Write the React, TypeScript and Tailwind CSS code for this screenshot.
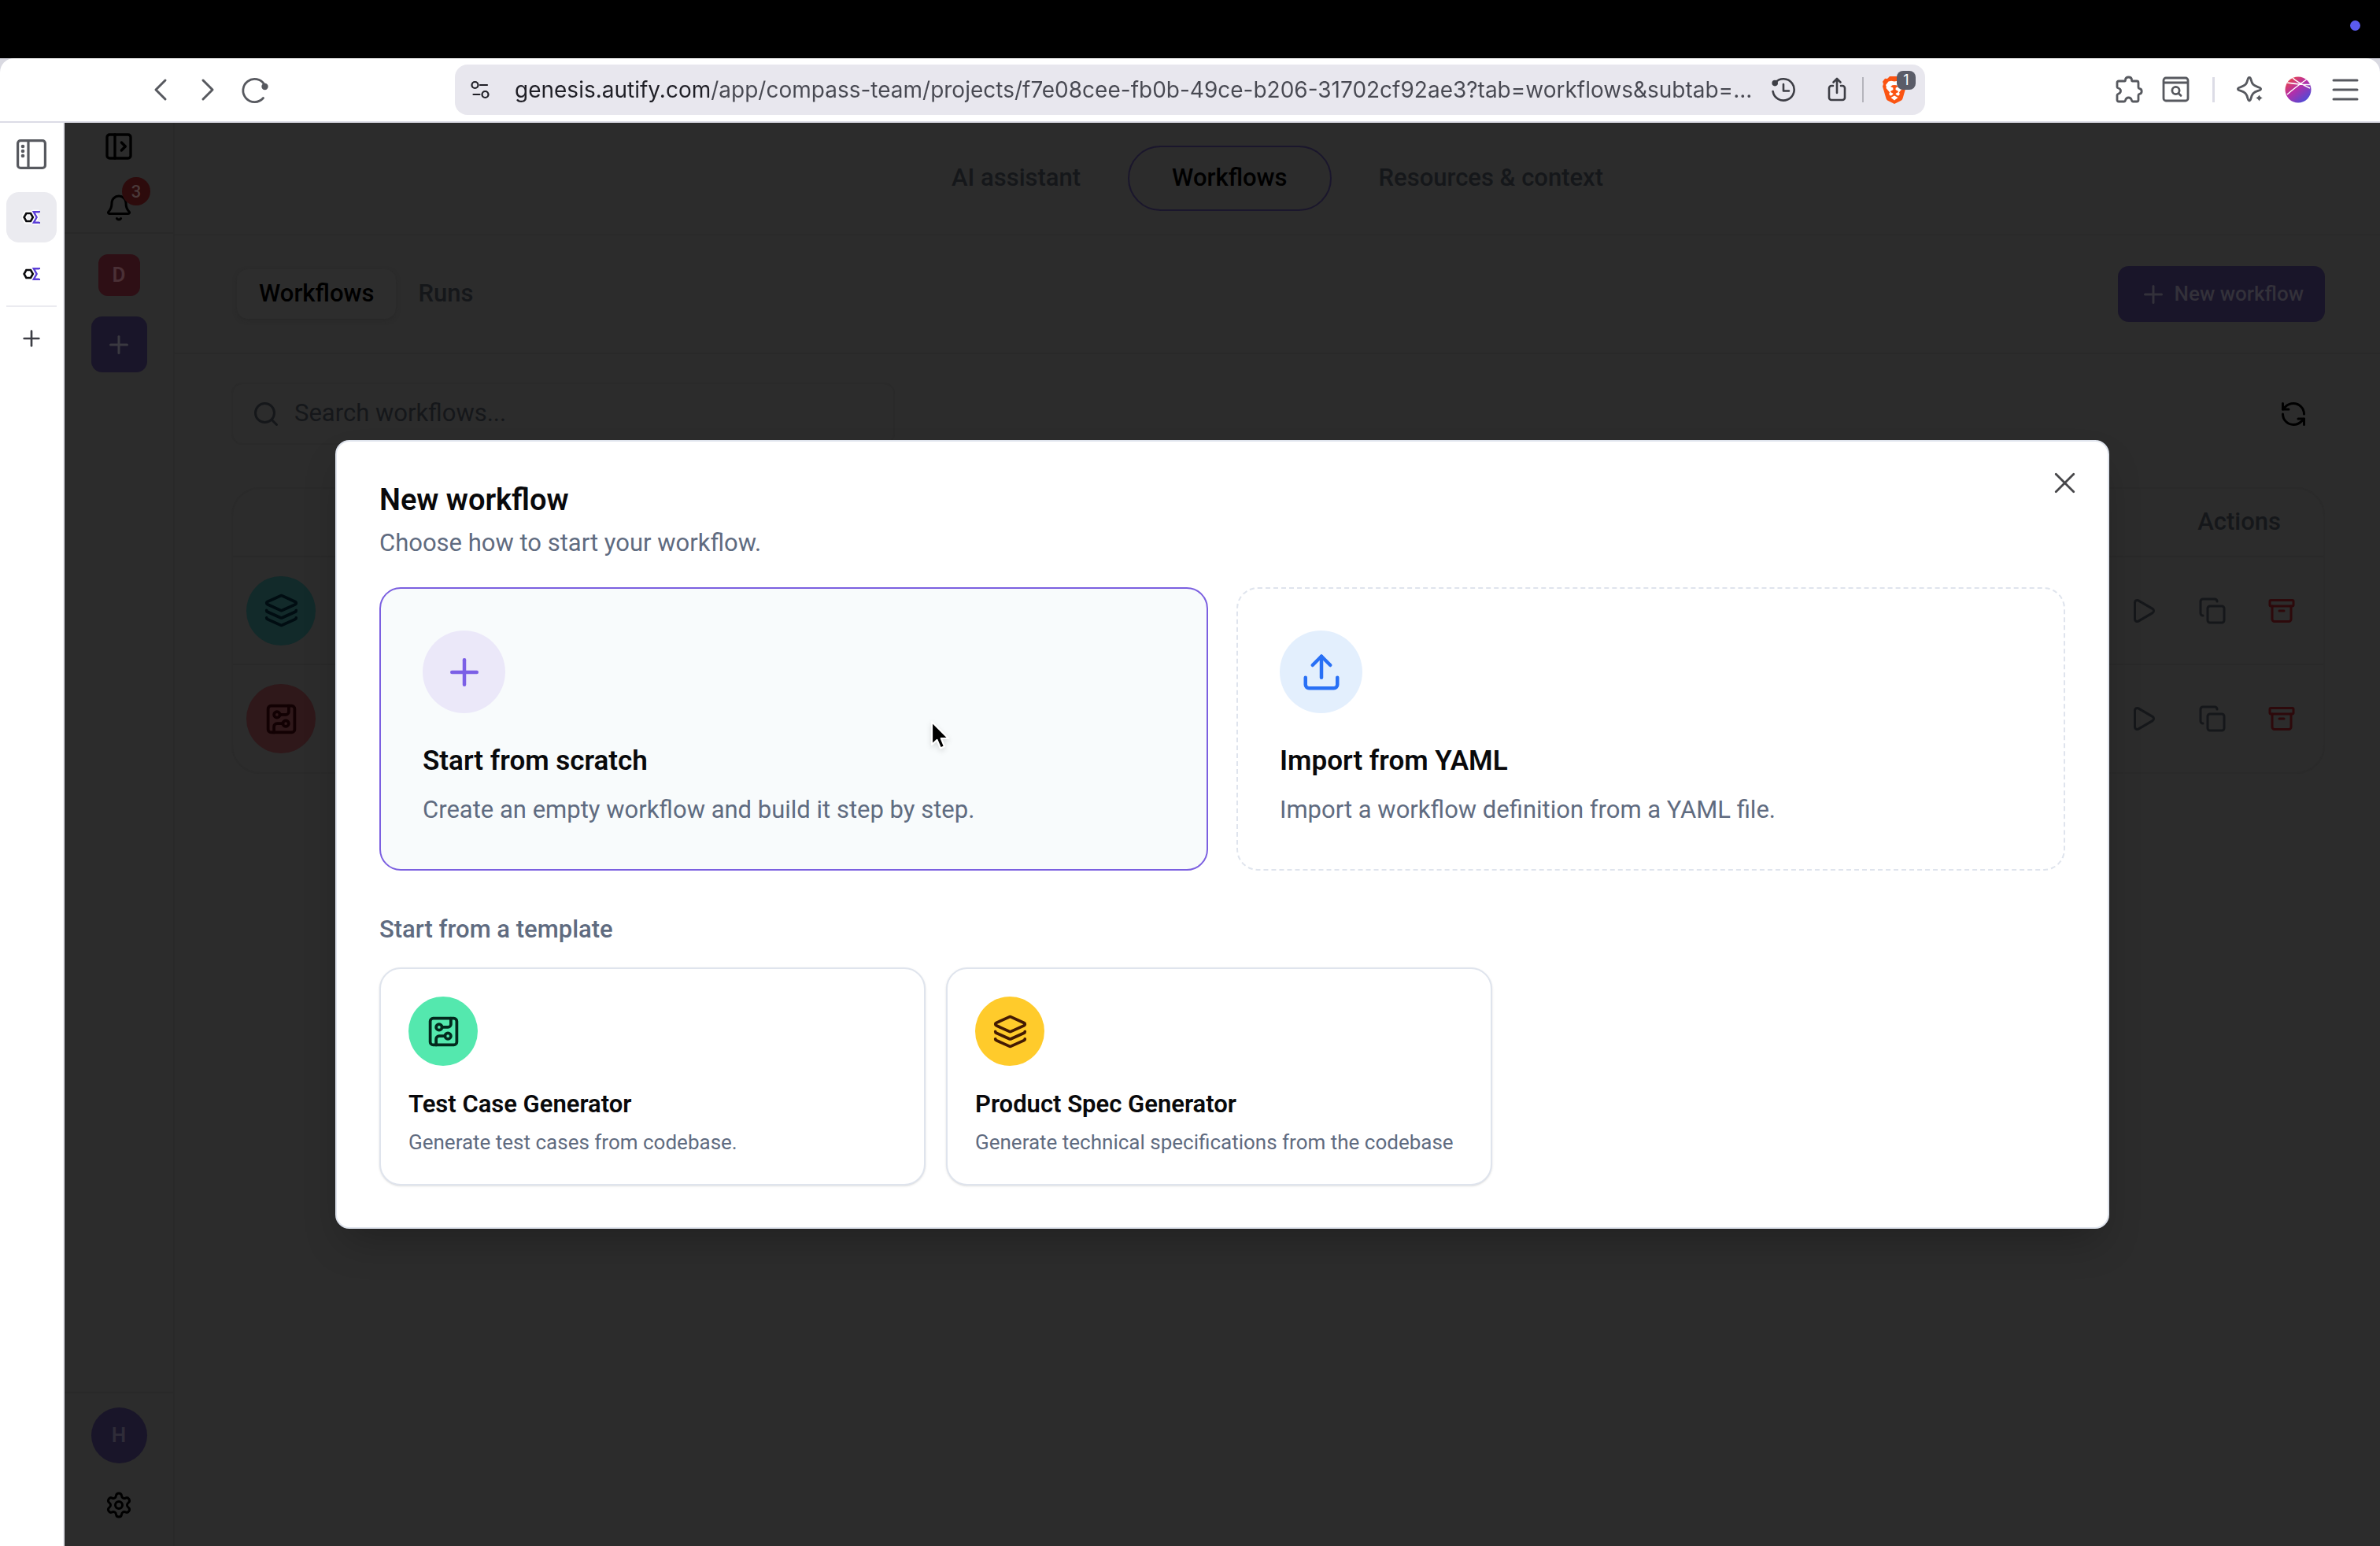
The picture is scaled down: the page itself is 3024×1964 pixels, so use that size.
import React from 'react';
import {
  Archive,
  Bell,
  ChevronLeft,
  ChevronRight,
  CircuitBoard,
  Copy,
  Layers,
  PanelLeftOpen,
  Play,
  Plus,
  RefreshCcw,
  Search,
  Settings,
  Upload,
  X,
} from 'lucide-react';

type WorkflowIcon = React.ComponentType<{ className?: string; strokeWidth?: number }>;

interface Workflow {
  id: string;
  icon: WorkflowIcon;
  iconClass: string;
}

interface Template {
  name: string;
  description: string;
  icon: WorkflowIcon;
  iconClass: string;
}

const workflows: Workflow[] = [
  { id: 'spec', icon: Layers, iconClass: 'bg-[#122a2a] text-[#010d12]' },
  { id: 'tests', icon: CircuitBoard, iconClass: 'bg-[#2f181a] text-[#120103]' },
];

const templates: Template[] = [
  {
    name: 'Test Case Generator',
    description: 'Generate test cases from codebase.',
    icon: CircuitBoard,
    iconClass: 'bg-[#54e8ae] text-[#03291d]',
  },
  {
    name: 'Product Spec Generator',
    description: 'Generate technical specifications from the codebase',
    icon: Layers,
    iconClass: 'bg-[#ffcb2b] text-[#431a03]',
  },
];

const pageUrl =
  'genesis.autify.com/app/compass-team/projects/f7e08cee-fb0b-49ce-b206-31702cf92ae3?tab=workflows&subtab=...';

/* ---------- Browser icons ---------- */

const ReloadIcon = () => (
  <svg viewBox="0 0 36 36" className="size-9" fill="none" stroke="#57595f" strokeWidth="2.8" strokeLinecap="round">
    <path d="M28.5 28.5A14.6 14.6 0 1 1 30 11.5" />
    <circle cx="30.500" cy="14" r="4.2" fill="#57595f" stroke="none" />
  </svg>
);

const TuneIcon = () => (
  <svg viewBox="0 0 24 24" className="size-6 shrink-0" fill="none" stroke="#1f1f26" strokeWidth="2.2" strokeLinecap="round">
    <circle cx="5.5" cy="6" r="4" />
    <path d="M12 6h9M3.5 18h8" />
    <circle cx="18.5" cy="18" r="4" />
  </svg>
);

const HistoryIcon = () => (
  <svg viewBox="0 0 32 32" className="size-8" fill="none" stroke="#3d3e45" strokeWidth="2.6" strokeLinecap="round" strokeLinejoin="round">
    <path d="M2.6 18A13.6 13.6 0 1 0 5.6 7.2" />
    <circle cx="5.2" cy="7.6" r="3.8" fill="#3d3e45" stroke="none" />
    <path d="M16 9v8.5h7" />
  </svg>
);

const ShareIcon = () => (
  <svg viewBox="0 0 32 32" className="size-8" fill="none" stroke="#3d3e45" strokeWidth="2.6" strokeLinecap="round" strokeLinejoin="round">
    <path d="M16 20V2M11.5 6.500L16 2l4.500 4.500M11 11H9a3 3 0 0 0-3 3v12a3 3 0 0 0 3 3h14a3 3 0 0 0 3-3V14a3 3 0 0 0-3-3h-2" />
  </svg>
);

const BraveIcon = () => (
  <svg viewBox="0 0 32 36" className="h-9 w-8">
    <path
      fill="#fb5412"
      d="M10 1h12l3 3 3-.3 3 4-1 3 1 3-4.500 15.500a5 5 0 0 1-2 2.500L16 36l-8.500-4.300a5 5 0 0 1-2-2.500L1 13.700l1-3-1-3 3-4L7 4z"
    />
    <path
      fill="#fff"
      d="M16 7.500l4-.8 3.500.8 3.500 4.500-.8 2 .3 2-4.500 5.300.8 2.200-1.300 2-2-.3-2-1.800.5-1 3-1.500-.4-1.200-3.100-1.700.2-2.500 3.300-1.500-2.500-1.800L16 12l-2.500.2-2.500 1.800 3.300 1.500.2 2.500-3.100 1.700-.4 1.200 3 1.500.5 1-2 1.800-2 .3-1.300-2 .8-2.200L5.500 16l.3-2-.8-2 3.500-4.500 3.500-.8zM16 25.500l4.500 2.500-4.500 3.500-4.500-3.500z"
    />
  </svg>
);

const PuzzleIcon = () => (
  <svg viewBox="0 0 36 36" className="size-9" fill="none" stroke="#57595f" strokeWidth="2.8" strokeLinejoin="round">
    <path d="M5 7h7.500c.8 0 1-.7 1-1.500C13.500 3 15 2 17.500 2s4 1 4 3.500c0 .8.200 1.500 1 1.500H28a2 2 0 0 1 2 2v6c0 1 .5 1.500 1.500 1.700 1.700.4 2.700 1.500 2.700 3.300s-1 3-2.700 3.300c-1 .2-1.500.7-1.500 1.700v6a2 2 0 0 1-2 2h-5c-1 0-1.300-.6-1.500-1.500C21 29.500 19.800 28 17.500 28S14 29.500 13.500 31.500c-.2.900-.5 1.500-1.500 1.500H5a2 2 0 0 1-2-2v-6c0-1 .5-1.300 1.500-1.700C6.500 22.500 7.500 21.500 7.500 19.500s-1-3-3-3.500C3.500 15.700 3 15.500 3 14.500V9a2 2 0 0 1 2-2z" />
  </svg>
);

const WindowSearchIcon = () => (
  <svg viewBox="0 0 36 36" className="size-9" fill="none" stroke="#57595f" strokeWidth="2.8" strokeLinecap="round">
    <rect x="2" y="3" width="31" height="29" rx="3" />
    <path d="M2.500 9h30" />
    <circle cx="17.500" cy="19" r="4.6" />
    <path d="M21 22.500l3 3" />
  </svg>
);

const SparkleIcon = () => (
  <svg viewBox="0 0 36 36" className="size-9" fill="none" stroke="#57595f" strokeWidth="2.8" strokeLinejoin="round">
    <path d="M16 2.500c1.200 0 1.600 1 2 2.400 1.500 6.100 2.800 7.700 9.600 9.900 1.500.5 3 .8 3 2.200s-1.500 1.700-3 2.200c-6.800 2.200-8.100 3.800-9.600 9.900-.4 1.400-.8 2.900-2 2.900s-1.600-1.500-2-2.900c-1.500-6.100-2.800-7.700-9.600-9.900-1.500-.5-3-.8-3-2.200s1.500-1.700 3-2.200c6.800-2.200 8.100-3.800 9.600-9.900.4-1.400.8-2.400 2-2.400z" />
    <path
      fill="#57595f"
      stroke="#fff"
      strokeWidth="1.5"
      d="M28.500 22c1 4.200 2 5.200 6.500 6.500-4.500 1.300-5.500 2.300-6.500 6.500-1-4.200-2-5.200-6.500-6.500 4.500-1.300 5.500-2.300 6.500-6.500z"
    />
  </svg>
);

const AssistantIcon = () => (
  <svg viewBox="0 0 34 34" className="size-[34px]">
    <defs>
      <linearGradient id="assistant" x1="0.1" y1="0" x2="0.9" y2="1">
        <stop offset="0" stopColor="#f04a3c" />
        <stop offset="0.45" stopColor="#b52ea8" />
        <stop offset="1" stopColor="#3a52e0" />
      </linearGradient>
      <clipPath id="assistantClip">
        <circle cx="17" cy="17" r="16.5" />
      </clipPath>
    </defs>
    <circle cx="17" cy="17" r="16.5" fill="url(#assistant)" />
    <g clipPath="url(#assistantClip)" stroke="#fff" strokeWidth="1.5" fill="none">
      <path d="M3 8c10 1.500 20 3 31 2.500M10 2c5 5 11 8 22 13M29 3C19 10 11 16 3 23" />
    </g>
  </svg>
);

const MenuIcon = () => (
  <svg viewBox="0 0 34 28" className="h-7 w-[34px]" stroke="#57595f" strokeWidth="3" strokeLinecap="round">
    <path d="M2 2h30M2 14h30M2 26h30" />
  </svg>
);

const SidebarIcon = () => (
  <svg viewBox="0 0 40 40" className="size-10" fill="none" stroke="#57595f" strokeWidth="3.2">
    <rect x="2.600" y="2.600" width="34.800" height="34.800" rx="3.500" />
    <path d="M16 3v34" />
    <g fill="#57595f" stroke="none">
      <circle cx="9" cy="10" r="2.3" />
      <circle cx="9" cy="16" r="2.3" />
      <circle cx="9" cy="22" r="2.3" />
    </g>
  </svg>
);

const SiteIcon = () => (
  <svg viewBox="0 0 24 20" className="h-5 w-6" fill="none">
    <path d="M5.200 4.800h6l3 5.200-3 5.200h-6L2.200 10z" stroke="#fff" strokeWidth="6" strokeLinejoin="round" />
    <path d="M21.500 3h-7l4.500 7-4.500 7h7" stroke="#fff" strokeWidth="5" strokeLinejoin="round" />
    <path d="M5.400 5h5.600l2.800 5-2.800 5H5.400L2.600 10z" stroke="#0b0b0e" strokeWidth="2.6" />
    <path d="M21.800 4v-.8H14.800L18.600 10l-3.800 6.800h7V16" stroke="#5b3fd6" strokeWidth="2.4" />
  </svg>
);

const CursorIcon = () => (
  <svg viewBox="0 0 28 40" className="absolute top-[166px] left-[697px] h-10 w-7 drop-shadow-md">
    <path d="M3 3v29l6.500-6 4.500 10.500 5-2.200L14.800 24H24z" fill="#000" stroke="#fff" strokeWidth="2.2" strokeLinejoin="round" />
  </svg>
);

/* ---------- Browser chrome ---------- */

const BrowserToolbar: React.FC = () => (
  <header className="bg-[#d9d9e1]">
    <div className="flex h-[82px] items-center rounded-t-[18px] border-b-2 border-[#dcdce6] bg-white">
      <div className="flex w-[578px] shrink-0 items-center pl-[174px]">
        <button aria-label="Back" className="flex w-[60px] justify-center text-[#57595f]">
          <ChevronLeft className="h-[54px] w-12" strokeWidth={1.5} />
        </button>
        <button aria-label="Forward" className="flex w-[60px] justify-center text-[#57595f]">
          <ChevronRight className="h-[54px] w-12" strokeWidth={1.5} />
        </button>
        <button aria-label="Reload" className="flex w-[60px] justify-center">
          <ReloadIcon />
        </button>
      </div>

      <div className="flex h-16 min-w-0 flex-1 items-center rounded-2xl bg-[#e8e7ee] pl-5">
        <TuneIcon />
        <input
          aria-label="Address"
          readOnly
          value={pageUrl}
          className="ml-8 min-w-0 flex-1 bg-[linear-gradient(90deg,#1f1f26_248px,#484952_248px)] bg-clip-text font-['Inter',sans-serif] text-[28px] leading-10 text-transparent outline-none"
        />
        <button aria-label="History" className="mr-2 flex w-[60px] justify-center">
          <HistoryIcon />
        </button>
        <button aria-label="Share" className="flex w-[60px] justify-center">
          <ShareIcon />
        </button>
        <div className="ml-0.5 h-8 w-0.5 bg-[#b4b4bc]" />
        <button aria-label="Brave Shields" className="relative flex w-[78px] justify-center">
          <BraveIcon />
          <span className="absolute -top-1.5 right-3 flex size-6 items-center justify-center rounded-lg bg-[#5a5c68] font-['Inter',sans-serif] text-lg text-white">
            1
          </span>
        </button>
      </div>

      <div className="flex w-[578px] shrink-0 items-center justify-end pr-[14px]">
        <button aria-label="Extensions" className="flex w-[60px] justify-center">
          <PuzzleIcon />
        </button>
        <button aria-label="Search page" className="flex w-[60px] justify-center">
          <WindowSearchIcon />
        </button>
        <div className="mx-4 h-8 w-[3px] bg-[#dcdce6]" />
        <button aria-label="Leo" className="flex w-[60px] justify-center">
          <SparkleIcon />
        </button>
        <button aria-label="Assistant" className="flex w-[60px] justify-center">
          <AssistantIcon />
        </button>
        <button aria-label="Menu" className="flex w-[60px] justify-center">
          <MenuIcon />
        </button>
      </div>
    </div>
  </header>
);

const BrowserTabs: React.FC = () => (
  <aside className="flex w-[82px] shrink-0 flex-col items-center border-r-2 border-[#e9e9ef] bg-white pt-5">
    <button aria-label="Toggle tabs">
      <SidebarIcon />
    </button>
    <button aria-label="Tab 1" className="mt-7 flex size-16 items-center justify-center rounded-2xl bg-[#ebebf0]">
      <SiteIcon />
    </button>
    <button aria-label="Tab 2" className="mt-2 flex size-16 items-center justify-center">
      <SiteIcon />
    </button>
    <div className="mt-2 h-0.5 w-16 bg-[#ebebf0]" />
    <button aria-label="New tab" className="mt-6 text-[#3d3e45]">
      <Plus className="size-8" strokeWidth={2} />
    </button>
  </aside>
);

/* ---------- App (dimmed behind the dialog) ---------- */

const AppSidebar: React.FC = () => (
  <aside className="flex w-[140px] shrink-0 flex-col border-r-2 border-[#292929]">
    <div className="flex flex-col items-center gap-10 border-b-2 border-[#292929] pt-[10px] pb-[13px] text-black">
      <button aria-label="Open sidebar">
        <PanelLeftOpen className="size-10" />
      </button>
      <button aria-label="Notifications" className="relative">
        <Bell className="size-9" />
        <span className="absolute -top-[21px] -right-[22px] flex size-9 items-center justify-center rounded-full bg-[#2d0b0c] text-[22px] font-medium text-[#4a3a3a]">
          3
        </span>
      </button>
    </div>

    <div className="flex flex-1 flex-col items-center gap-[26px] pt-[26px]">
      <button className="flex size-[53px] items-center justify-center rounded-xl bg-[#2e0f15] text-[26px] font-semibold text-[#4a3036]">
        D
      </button>
      <button aria-label="Add project" className="flex size-[71px] items-center justify-center rounded-[14px] bg-[#191529] text-[#3a3940]">
        <Plus className="size-9" />
      </button>
    </div>

    <div className="flex flex-col items-center gap-[35px] border-t-2 border-[#292929] pt-[18px] pb-[34px]">
      <button className="flex size-[71px] items-center justify-center rounded-full bg-[#191529] text-[26px] font-semibold text-[#2f2c38]">
        H
      </button>
      <button aria-label="Settings" className="text-black">
        <Settings className="size-9" />
      </button>
    </div>
  </aside>
);

const WorkflowTable: React.FC = () => (
  <div className="mt-[54px] rounded-[36px] border-2 border-[#2a2a2a]">
    <table className="w-full">
      <thead>
        <tr className="h-[86px] border-b-2 border-[#292929]">
          <th aria-label="Workflow" />
          <th scope="col" className="pr-[54px] text-right text-[31px] font-medium text-[#15171a]">
            Actions
          </th>
        </tr>
      </thead>
      <tbody>
        {workflows.map(({ id, icon: Icon, iconClass }) => (
          <tr key={id} className="h-[137px] border-b-2 border-[#292929] last:border-b-0">
            <td className="pl-[17px]">
              <div className={`flex size-[88px] items-center justify-center rounded-full ${iconClass}`}>
                <Icon className="size-[45px]" />
              </div>
            </td>
            <td className="pr-[9px]">
              <div className="flex justify-end text-[#15171a]">
                <button aria-label="Run" className="flex w-[88px] justify-center">
                  <Play className="size-9" />
                </button>
                <button aria-label="Duplicate" className="flex w-[88px] justify-center">
                  <Copy className="size-9" />
                </button>
                <button aria-label="Archive" className="flex w-[88px] justify-center text-[#2d090b]">
                  <Archive className="size-9" />
                </button>
              </div>
            </td>
          </tr>
        ))}
      </tbody>
    </table>
  </div>
);

const WorkflowsPage: React.FC = () => (
  <main className="min-w-0 flex-1">
    <nav className="flex items-center justify-center gap-[60px] border-b-2 border-[#2a2a2a] py-[29px] text-[31px] font-medium text-[#15171a]">
      <a href="#assistant">AI assistant</a>
      <a href="#workflows" className="flex h-[83px] items-center rounded-full border-2 border-[#1a162c] px-[54px] text-black">
        Workflows
      </a>
      <a href="#resources">Resources &amp; context</a>
    </nav>

    <div className="flex items-center justify-between border-b-2 border-[#292929] pr-[70px] pl-[72px] py-[39px]">
      <div className="flex items-center px-[7px] text-[31px] font-medium">
        <button className="h-[63px] rounded-[14px] bg-[#2d2d2d] px-7 text-black shadow-[0_2px_5px_#282828]">Workflows</button>
        <button className="h-[63px] px-7 text-[#15171a]">Runs</button>
      </div>
      <button className="flex h-[71px] items-center gap-[9px] rounded-[14px] bg-[#191529] px-[27px] text-[26px] font-medium text-[#33313a]">
        <Plus className="size-9" />
        New workflow
      </button>
    </div>

    <div className="pt-9 pr-[70px] pl-[72px]">
      <div className="flex items-center justify-between">
        <label className="flex h-[79px] w-[843px] items-center gap-[18px] rounded-[14px] border-2 border-[#2a2a2a] pl-6 text-[#15171a]">
          <Search className="size-9" />
          <input
            aria-label="Search workflows"
            placeholder="Search workflows..."
            className="min-w-0 flex-1 bg-transparent text-[31px] outline-none placeholder:text-[#15171a]"
          />
        </label>
        <button aria-label="Refresh" className="flex w-20 justify-center text-black">
          <RefreshCcw className="size-9" />
        </button>
      </div>
      <WorkflowTable />
    </div>
  </main>
);

/* ---------- Dialog ---------- */

const TemplateCard: React.FC<{ template: Template }> = ({ template }) => {
  const Icon = template.icon;
  return (
    <button className="flex flex-col items-start rounded-[27px] border-2 border-[#dfe4ed] bg-white p-[35px] text-left shadow-sm">
      <span className={`flex size-[88px] items-center justify-center rounded-full ${template.iconClass}`}>
        <Icon className="size-[45px]" />
      </span>
      <span className="mt-[26px] text-[31px] leading-[45px] font-semibold">{template.name}</span>
      <span className="mt-2 text-[26px] leading-9 whitespace-nowrap text-[#5f6b80]">{template.description}</span>
    </button>
  );
};

const NewWorkflowDialog: React.FC = () => (
  <div className="absolute inset-0 flex items-center justify-center">
    <section
      role="dialog"
      aria-labelledby="dialog-title"
      className="relative w-full max-w-[2254px] rounded-[18px] border-2 border-[#dfe4ed] bg-white px-[54px] pt-[56px] pb-[53px] text-[#09090b] shadow-2xl"
    >
      <button aria-label="Close" className="absolute top-[30px] right-8 text-[#47474a]">
        <X className="size-[45px]" strokeWidth={1.5} />
      </button>

      <h2 id="dialog-title" className="text-[38px] leading-9 font-semibold">
        New workflow
      </h2>
      <p className="mt-[14px] text-[31px] leading-[45px] text-[#5f6b80]">Choose how to start your workflow.</p>

      <div className="mt-[34px] grid grid-cols-2 gap-9">
        <button className="relative flex flex-col items-start rounded-[27px] border-2 border-[#7b5fe0] bg-[#f8fbfc] p-[53px] text-left">
          <span className="flex size-[105px] items-center justify-center rounded-full bg-[#ebe8f9] text-[#7b5fe6]">
            <Plus className="size-[54px]" />
          </span>
          <span className="mt-9 text-[35px] leading-[50px] font-semibold">Start from scratch</span>
          <span className="mt-[14px] text-[31px] leading-[45px] text-[#5f6b80]">
            Create an empty workflow and build it step by step.
          </span>
          <CursorIcon />
        </button>
        <button className="flex flex-col items-start rounded-[27px] border-2 border-dashed border-[#dfe4ed] bg-white p-[53px] text-left">
          <span className="flex size-[105px] items-center justify-center rounded-full bg-[#e3effd] text-[#2970f5]">
            <Upload className="size-[54px]" />
          </span>
          <span className="mt-9 text-[35px] leading-[50px] font-semibold">Import from YAML</span>
          <span className="mt-[14px] text-[31px] leading-[45px] text-[#5f6b80]">
            Import a workflow definition from a YAML file.
          </span>
        </button>
      </div>

      <h3 className="mt-[52px] text-[31px] leading-[45px] font-medium text-[#5f6b80]">Start from a template</h3>
      <div className="mt-[26px] grid grid-cols-3 gap-[26px] pr-2">
        {templates.map((template) => (
          <TemplateCard key={template.name} template={template} />
        ))}
      </div>
    </section>
  </div>
);

export default function App() {
  return (
    <div className="flex min-h-screen flex-col bg-black font-['Roboto',sans-serif]">
      {/* Screen menu bar */}
      <div className="flex h-[74px] items-center justify-end pr-[25px]">
        <span className="mb-[10px] size-[13px] rounded-full bg-[#5b5bef]" />
      </div>

      <BrowserToolbar />

      <div className="flex flex-1">
        <BrowserTabs />
        <div className="relative flex min-w-0 flex-1 bg-[#2c2c2c]">
          <AppSidebar />
          <WorkflowsPage />
          <NewWorkflowDialog />
        </div>
      </div>
    </div>
  );
}
